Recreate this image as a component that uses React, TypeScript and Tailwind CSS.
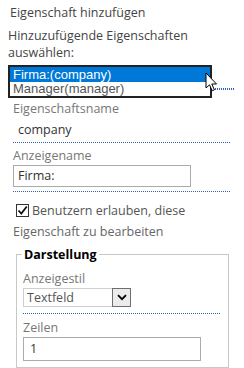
import React from 'react';

const ui = "font-['Open_Sans','Noto_Sans',sans-serif]";
const dotted = 'border-b border-dotted border-[#2f5fb3]';

const Cursor: React.FC = () => (
    <svg className="absolute left-[205px] top-[72px]" width="14" height="21" viewBox="0 0 14 21">
        <path d="M1 1 L1 16 L4.5 12.8 L7.2 18.8 L9.4 17.8 L6.8 12 L11.5 12 Z" fill="#fff" stroke="#000" strokeWidth="1" strokeLinejoin="miter" />
    </svg>
);

const App: React.FC = () => {
    const options = [
        { label: 'Firma:(company)', selected: true },
        { label: 'Manager(manager)', selected: false },
    ];

    return (
        <div className={`relative w-[244px] h-[368px] overflow-hidden bg-white text-[12.5px] leading-[17px] ${ui}`}>
            <div className="pt-[4px]">
                <p className="ml-[10px] text-[#444]">Eigenschaft hinzufügen</p>
                <p className="ml-[8px] mt-[6px] text-[#444]">Hinzuzufügende Eigenschaften<br />auswählen:</p>

                <div className="flex items-start mt-[4px] ml-[8px]">
                    <div className="w-[204px] h-[33px] border-2 border-[#222] bg-white text-[13px] font-['Liberation_Sans',Arial,sans-serif]">
                        {options.map(o => (
                            <div
                                key={o.label}
                                className={o.selected
                                    ? 'h-[15px] leading-[15px] pl-[3px] bg-[#0078d7] text-white'
                                    : 'h-[14px] leading-[14px] pl-[3px] text-[#555]'}
                            >
                                {o.label}
                            </div>
                        ))}
                    </div>
                    <div className="ml-[3px] mt-[23px] w-[20px] h-[2px] bg-[repeating-linear-gradient(90deg,#2e63c4_0_1px,transparent_1px_2px)]" />
                </div>

                <div className="ml-[13px] w-[217px]">
                    <p className="mt-[2px] text-[#777]">Eigenschaftsname</p>
                    <p className="mt-[4px] ml-[5px] text-[#333]">company</p>
                    <div className={`mt-[4px] ${dotted}`} />

                    <p className="mt-[4px] text-[#777]">Anzeigename</p>
                    <div className="mt-[1px] w-[178px] h-[22px] border border-[#ababab] pl-[4px] leading-[20px] text-[#333]">Firma:</div>
                    <div className={`mt-[4px] ${dotted}`} />

                    <label className="mt-[10px] ml-[3px] flex items-center gap-[3px] text-[#555]">
                        <span className="w-[13px] h-[13px] border border-[#333] bg-white flex items-center justify-center">
                            <svg width="11" height="11" viewBox="0 0 11 11">
                                <path d="M1.5 5.5 L4.3 8.5 L9.8 1.5" fill="none" stroke="#111" strokeWidth="1.8" />
                            </svg>
                        </span>
                        Benutzern erlauben, diese
                    </label>
                    <p className="mt-[4px] text-[#666]">Eigenschaft zu bearbeiten</p>
                </div>

                <fieldset className="mt-[6px] ml-[16px] w-[213px] border border-[#c8c8c8] px-[6px] pb-[6px]">
                    <legend className="ml-[-1px] px-[2px] font-bold text-black">Darstellung</legend>
                    <p className="mt-[7px] text-[#777]">Anzeigestil</p>
                    <div className="mt-[1px] flex w-[108px] h-[19px] border border-[#cfcfcf] bg-white">
                        <span className="flex-1 pl-[3px] leading-[17px] text-[#555]">Textfeld</span>
                        <span className="w-[19px] h-[19px] -mt-px -mr-px border border-[#6e6e6e] bg-[#ececec] flex items-center justify-center">
                            <svg width="10" height="7" viewBox="0 0 10 7">
                                <path d="M1 1.2 L5 5.2 L9 1.2" fill="none" stroke="#000" strokeWidth="1.8" />
                            </svg>
                        </span>
                    </div>
                    <div className={`mt-[6px] w-[197px] ${dotted}`} />
                    <p className="mt-[5px] text-[#777]">Zeilen</p>
                    <div className="mt-[1px] w-[178px] h-[24px] border border-[#ababab] pl-[6px] leading-[22px] text-[#333]">1</div>
                </fieldset>
            </div>
            <Cursor />
        </div>
    );
};

export default App;
